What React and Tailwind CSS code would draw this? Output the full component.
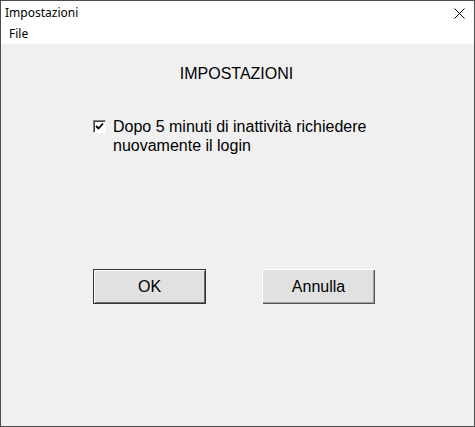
export default function App() {
  return (
    <div className="w-[475px] h-[427px] border border-[#4d4d4d] flex flex-col bg-[#f0f0f0] overflow-hidden" style={{ fontFamily: '"Liberation Sans", Arial, sans-serif' }}>
      <div className="h-[23px] bg-white flex items-center justify-between pl-[4px] pr-[9px]">
        <span className="text-[12px] text-black" style={{ fontFamily: '"Noto Sans", "Open Sans", sans-serif' }}>Impostazioni</span>
        <svg width="11" height="11" viewBox="0 0 11 11" className="mt-[1px]">
          <path d="M0.5 0.5 L10.5 10.5 M10.5 0.5 L0.5 10.5" stroke="#000" strokeWidth="1" fill="none" />
        </svg>
      </div>
      <div className="h-[20px] bg-white flex items-center pl-[8px]">
        <span className="text-[12px] text-black" style={{ fontFamily: '"Noto Sans", "Open Sans", sans-serif' }}>File</span>
      </div>
      <div className="flex-1 flex flex-col">
        <div className="mt-[20px] text-center text-[16px] leading-[19px] text-black pr-[2px]">IMPOSTAZIONI</div>
        <div className="mt-[34px] ml-[92px] flex items-start">
          <div className="mt-[3px] w-[13px] h-[13px] border-t border-l border-[#808080] border-b border-r border-b-white border-r-white bg-white flex items-center justify-center shadow-[inset_1px_1px_#404040]">
            <svg width="9" height="9" viewBox="0 0 9 9">
              <path d="M1 4 L3.5 6.5 L8 1.5" stroke="#000" strokeWidth="1.8" fill="none" />
            </svg>
          </div>
          <div className="ml-[7px] text-[16px] leading-[19px] text-black">
            Dopo 5 minuti di inattività richiedere<br />nuovamente il login
          </div>
        </div>
        <div className="mt-[114px] ml-[92px] flex gap-[56px]">
          <button className="w-[113px] h-[35px] border border-[#333] bg-[#e1e1e1] text-[16px] text-black shadow-[inset_1px_1px_#fff,inset_-1px_-1px_#696969]">OK</button>
          <button className="w-[113px] h-[35px] bg-[#e1e1e1] text-[16px] text-black shadow-[inset_1px_1px_#fff,inset_-1px_-1px_#555,inset_-2px_-2px_#a0a0a0]">Annulla</button>
        </div>
      </div>
    </div>
  );
}
